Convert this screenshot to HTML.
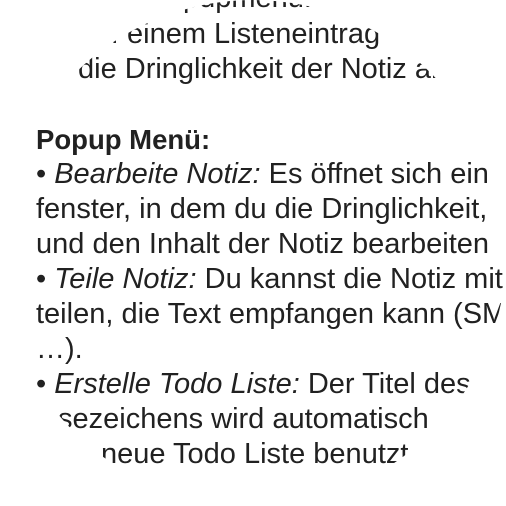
<!DOCTYPE html>
<html><head><style>
html,body{margin:0;padding:0;background:#fff;}
#c{position:relative;width:506px;height:506px;overflow:hidden;clip-path:circle(253px at 253px 253px);background:#fff;}
.l{position:absolute;white-space:nowrap;font-family:"Liberation Sans",sans-serif;font-size:29px;color:#212121;line-height:35px;height:35px;}
.p{position:absolute;right:100%;top:0;}
i{font-style:italic;}
b{font-weight:bold;font-size:27.5px;}
</style></head><body>
<div id="c">
<div class="l" style="top:-19px;left:183px"><span class="p">Öffne das Po</span>pupmenü:</div>
<div class="l" style="top:17px;left:127px"><span class="p">Tippe auf&nbsp;</span>einem Listeneintrag</div>
<div class="l" style="top:52px;left:78px"><span class="p">zeigt&nbsp;</span>die Dringlichkeit der Notiz an</div>
<div class="l" style="top:122px;left:36px"><b>Popup Menü:</b></div>
<div class="l" style="top:157px;left:36px">• <i>Bearbeite Notiz:</i> Es öffnet sich ein</div>
<div class="l" style="top:192px;left:36px">fenster, in dem du die Dringlichkeit,</div>
<div class="l" style="top:227px;left:36px">und den Inhalt der Notiz bearbeiten</div>
<div class="l" style="top:262px;left:36px">• <i>Teile Notiz:</i> Du kannst die Notiz mit</div>
<div class="l" style="top:297px;left:36px">teilen, die Text empfangen kann (SMS</div>
<div class="l" style="top:332px;left:36px">…).</div>
<div class="l" style="top:367px;left:36px">• <i>Erstelle Todo Liste:</i> Der Titel des</div>
<div class="l" style="top:402px;left:58px"><span class="p">Le</span>sezeichens wird automatisch</div>
<div class="l" style="top:437px;left:101px"><span class="p">als&nbsp;</span>neue Todo Liste benutzt.</div>
</div>
</body></html>
